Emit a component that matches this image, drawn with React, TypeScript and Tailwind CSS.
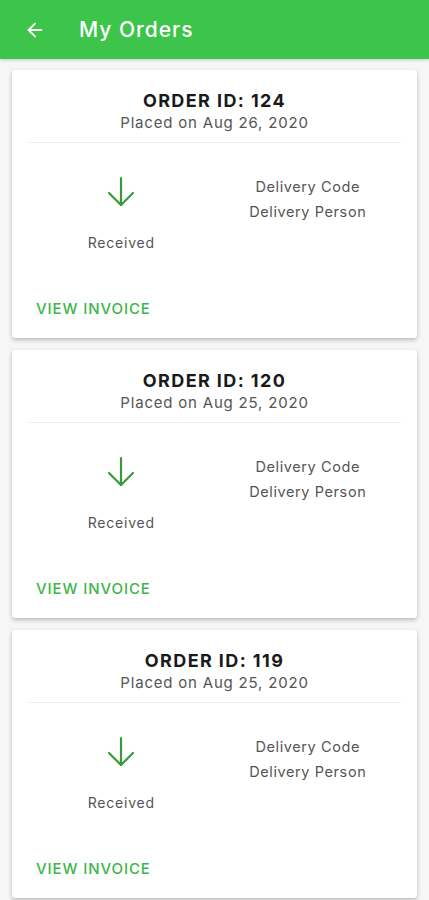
import { ArrowLeft } from "lucide-react";

const orders = [
  { id: 124, date: "Aug 26, 2020" },
  { id: 120, date: "Aug 25, 2020" },
  { id: 119, date: "Aug 25, 2020" },
];

const DownArrow = () => (
  <svg width="30" height="32" viewBox="0 0 30 32" fill="none" stroke="#3a9a3a" strokeWidth="2.2" strokeLinecap="round" strokeLinejoin="round">
    <path d="M15 2 V29" />
    <path d="M3 17 L15 29 L27 17" />
  </svg>
);

const OrderCard = ({ id, date }: { id: number; date: string }) => {
  return (
    <div className="bg-white rounded-[3px] shadow-[0_2px_4px_rgba(0,0,0,0.25)] h-[268px] flex flex-col">
      <div className="flex flex-col items-center pt-[20px]">
        <h2 className="text-[18px] leading-[22px] font-bold text-[#1a1a1a] tracking-[1.4px]">ORDER ID: {id}</h2>
        <p className="text-[15px] leading-[22px] text-[#555] tracking-[0.8px]">Placed on {date}</p>
      </div>
      <div className="mx-[16px] mt-[8px] border-t border-[#eeeeee]" />
      <div className="grid grid-cols-2 px-[16px] pt-[33px]">
        <div className="flex flex-col items-center">
          <DownArrow />
          <span className="mt-[24px] text-[14px] text-[#555] tracking-[0.8px]">Received</span>
        </div>
        <div className="flex flex-col items-center text-[14.5px] leading-[25px] text-[#555] tracking-[0.6px] -mt-[2px]">
          <span>Delivery Code</span>
          <span>Delivery Person</span>
        </div>
      </div>
      <div className="mt-auto pb-[18px] px-[24px]">
        <button className="text-[15px] text-[#3cb64a] font-medium tracking-[0.9px]">VIEW INVOICE</button>
      </div>
    </div>
  );
};

const App = () => {
  return (
    <div className="min-h-[900px] bg-[#f6f6f6] font-['Inter','Liberation_Sans',sans-serif]">
      <div className="h-[59px] bg-[#3dc44b] flex items-center px-[24px] shadow-[0_1px_3px_rgba(0,0,0,0.2)]">
        <ArrowLeft className="text-white" size={22} strokeWidth={2} />
        <h1 className="ml-[33px] text-white text-[21px] font-medium tracking-[1px]">My Orders</h1>
      </div>
      <div className="flex flex-col gap-[12px] px-[12px] pt-[11px]">
        {orders.map((o) => (
          <OrderCard key={o.id} id={o.id} date={o.date} />
        ))}
      </div>
    </div>
  );
};

export default App;
